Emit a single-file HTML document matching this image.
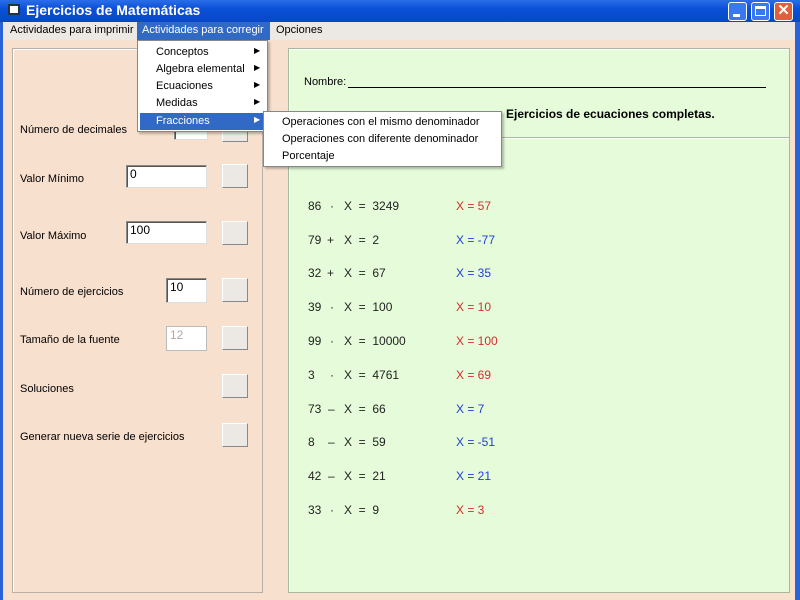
<!DOCTYPE html>
<html><head><meta charset="utf-8"><style>
*{margin:0;padding:0;box-sizing:border-box}
body{width:800px;height:600px;overflow:hidden;font-family:Tahoma,"Liberation Sans",sans-serif;font-size:11px;color:#000;background:#f8e0cf;position:relative}
.a{position:absolute}
#title{left:0;top:0;width:800px;height:22px;background:linear-gradient(#2b6ee8,#0a50d8 40%,#0848c8);color:#fff;font-size:14px;font-weight:bold}
#menu{left:3px;top:22px;width:792px;height:18px;background:#ece9e4}
.lb{left:0;top:22px;width:3px;height:578px;background:#2a62d8}
.rb{right:0;top:22px;width:5px;height:578px;background:#2a62d8}
.box{border:1px solid #b8b0a8;box-shadow:inset 1px 1px 0 #fff}
.tb{background:#fff;border:1px solid #888;border-right-color:#ddd;border-bottom-color:#ddd;box-shadow:inset 1px 1px 0 #555;font-size:12px;padding:1px 3px}
.bt{width:26px;height:24px;background:#ece9e4;border:1px solid #fff;border-right-color:#888;border-bottom-color:#888}
.eq{font-size:12px;font-family:Arial,"Liberation Sans",sans-serif;color:#222}
.r{color:#d03030}.bl{color:#2040d0}
.wb{top:2px;width:19px;height:19px;border:1px solid #fff;border-radius:3px;background:#3a78f0}
</style></head><body>
<div class="a" id="title"><div class="a" style="left:8px;top:4px;width:12px;height:11px;background:#fff;border:2px solid #234"></div><span class="a" style="left:26px;top:2px">Ejercicios de Matemáticas</span></div>
<div class="a wb" style="left:728px"><div class="a" style="left:4px;top:11px;width:7px;height:3px;background:#fff"></div></div>
<div class="a wb" style="left:751px"><div class="a" style="left:3px;top:3px;width:11px;height:10px;border:1px solid #fff;border-top-width:3px"></div></div>
<div class="a wb" style="left:774px;background:#e0603a;color:#fff;font-size:15px;font-weight:bold;text-align:center;line-height:16px">✕</div>
<div class="a lb"></div><div class="a rb"></div>
<div class="a" id="menu">
<span class="a" style="left:7px;top:2px">Actividades para imprimir</span>
<div class="a" style="left:134px;top:0;width:133px;height:18px;background:#316ac5"></div>
<span class="a" style="left:139px;top:2px;color:#fff">Actividades para corregir</span>
<span class="a" style="left:273px;top:2px">Opciones</span>
</div>
<div class="a box" style="left:12px;top:48px;width:251px;height:545px"></div>
<div class="a box" style="left:288px;top:48px;width:502px;height:90px;background:#e5fbd9;border-color:#a8b8a0"></div>
<div class="a box" style="left:288px;top:137px;width:502px;height:456px;background:#e5fbd9;border-color:#a8b8a0"></div>
<span class="a" style="left:304px;top:76px;font-size:11px">Nombre:</span>
<div class="a" style="left:348px;top:87px;width:418px;height:1px;background:#000"></div>
<span class="a" style="left:506px;top:107px;font-weight:bold;font-size:12px">Ejercicios de ecuaciones completas.</span>

<span class="a" style="left:20px;top:124px">Número de decimales</span>
<div class="a tb" style="left:174px;top:120px;width:34px;height:20px"></div><div class="a bt" style="left:222px;top:118px"></div>
<span class="a" style="left:20px;top:173px">Valor Mínimo</span>
<div class="a tb" style="left:126px;top:165px;width:81px;height:23px">0</div><div class="a bt" style="left:222px;top:164px"></div>
<span class="a" style="left:20px;top:230px">Valor Máximo</span>
<div class="a tb" style="left:126px;top:221px;width:81px;height:23px">100</div><div class="a bt" style="left:222px;top:221px"></div>
<span class="a" style="left:20px;top:286px">Número de ejercicios</span>
<div class="a tb" style="left:166px;top:278px;width:41px;height:25px">10</div><div class="a bt" style="left:222px;top:278px"></div>
<span class="a" style="left:20px;top:334px">Tamaño de la fuente</span>
<div class="a tb" style="left:166px;top:326px;width:41px;height:25px;color:#aaa;border-color:#bbb;box-shadow:none">12</div><div class="a bt" style="left:222px;top:326px"></div>
<span class="a" style="left:20px;top:383px">Soluciones</span><div class="a bt" style="left:222px;top:374px"></div>
<span class="a" style="left:20px;top:431px">Generar nueva serie de ejercicios</span><div class="a bt" style="left:222px;top:423px"></div>

<div class="eq">
<span class="a" style="left:308px;top:199px">86</span><span class="a" style="left:330px;top:199px">·</span><span class="a" style="left:344px;top:199px">X&nbsp;&nbsp;=&nbsp;&nbsp;3249</span><span class="a r" style="left:456px;top:199px">X = 57</span>
<span class="a" style="left:308px;top:233px">79</span><span class="a" style="left:327px;top:233px">+</span><span class="a" style="left:344px;top:233px">X&nbsp;&nbsp;=&nbsp;&nbsp;2</span><span class="a bl" style="left:456px;top:233px">X = -77</span>
<span class="a" style="left:308px;top:266px">32</span><span class="a" style="left:327px;top:266px">+</span><span class="a" style="left:344px;top:266px">X&nbsp;&nbsp;=&nbsp;&nbsp;67</span><span class="a bl" style="left:456px;top:266px">X = 35</span>
<span class="a" style="left:308px;top:300px">39</span><span class="a" style="left:330px;top:300px">·</span><span class="a" style="left:344px;top:300px">X&nbsp;&nbsp;=&nbsp;&nbsp;100</span><span class="a r" style="left:456px;top:300px">X = 10</span>
<span class="a" style="left:308px;top:334px">99</span><span class="a" style="left:330px;top:334px">·</span><span class="a" style="left:344px;top:334px">X&nbsp;&nbsp;=&nbsp;&nbsp;10000</span><span class="a r" style="left:456px;top:334px">X = 100</span>
<span class="a" style="left:308px;top:368px">3</span><span class="a" style="left:330px;top:368px">·</span><span class="a" style="left:344px;top:368px">X&nbsp;&nbsp;=&nbsp;&nbsp;4761</span><span class="a r" style="left:456px;top:368px">X = 69</span>
<span class="a" style="left:308px;top:402px">73</span><span class="a" style="left:328px;top:402px">–</span><span class="a" style="left:344px;top:402px">X&nbsp;&nbsp;=&nbsp;&nbsp;66</span><span class="a bl" style="left:456px;top:402px">X = 7</span>
<span class="a" style="left:308px;top:435px">8</span><span class="a" style="left:328px;top:435px">–</span><span class="a" style="left:344px;top:435px">X&nbsp;&nbsp;=&nbsp;&nbsp;59</span><span class="a bl" style="left:456px;top:435px">X = -51</span>
<span class="a" style="left:308px;top:469px">42</span><span class="a" style="left:328px;top:469px">–</span><span class="a" style="left:344px;top:469px">X&nbsp;&nbsp;=&nbsp;&nbsp;21</span><span class="a bl" style="left:456px;top:469px">X = 21</span>
<span class="a" style="left:308px;top:503px">33</span><span class="a" style="left:330px;top:503px">·</span><span class="a" style="left:344px;top:503px">X&nbsp;&nbsp;=&nbsp;&nbsp;9</span><span class="a r" style="left:456px;top:503px">X = 3</span>
</div>

<div class="a" style="left:137px;top:40px;width:131px;height:92px;background:#fff;border:1px solid #888;box-shadow:2px 2px 2px rgba(0,0,0,.25)">
<span class="a" style="left:18px;top:5px">Conceptos</span><span class="a" style="left:116px;top:5px;font-size:8px">▶</span>
<span class="a" style="left:18px;top:22px">Algebra elemental</span><span class="a" style="left:116px;top:22px;font-size:8px">▶</span>
<span class="a" style="left:18px;top:39px">Ecuaciones</span><span class="a" style="left:116px;top:39px;font-size:8px">▶</span>
<span class="a" style="left:18px;top:56px">Medidas</span><span class="a" style="left:116px;top:56px;font-size:8px">▶</span>
<div class="a" style="left:2px;top:72px;width:125px;height:17px;background:#316ac5;color:#fff"><span class="a" style="left:16px;top:2px">Fracciones</span><span class="a" style="left:114px;top:2px;font-size:8px">▶</span></div>
</div>
<div class="a" style="left:263px;top:111px;width:239px;height:56px;background:#fff;border:1px solid #888;box-shadow:2px 2px 2px rgba(0,0,0,.25)">
<span class="a" style="left:18px;top:4px">Operaciones con el mismo denominador</span>
<span class="a" style="left:18px;top:21px">Operaciones con diferente denominador</span>
<span class="a" style="left:18px;top:38px">Porcentaje</span>
</div>
</body></html>
